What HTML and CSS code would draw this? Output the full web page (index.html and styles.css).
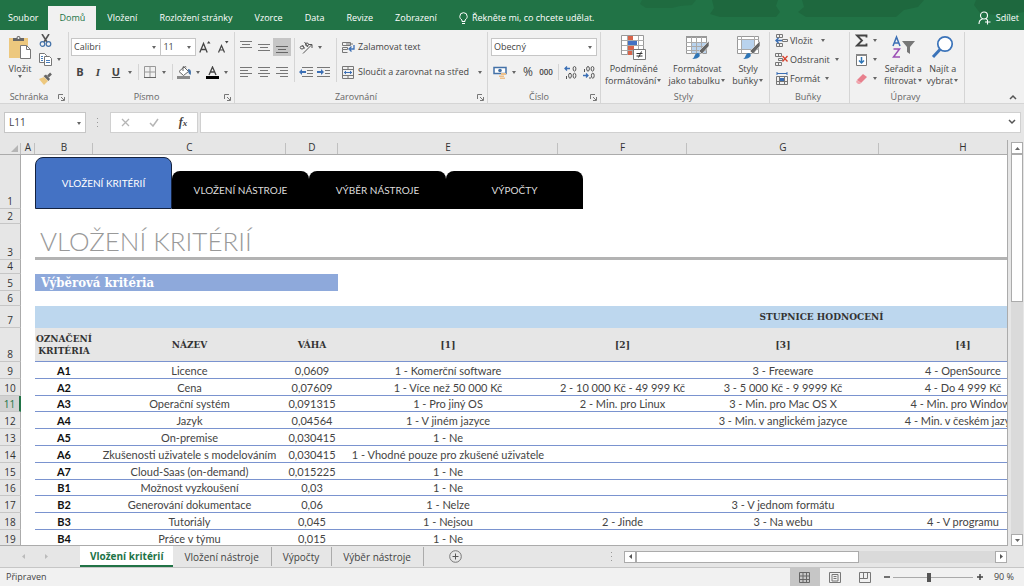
FILE: index.html
```html
<!DOCTYPE html>
<html lang="cs">
<head>
<meta charset="utf-8">
<title>Vložení kritérií</title>
<link rel="stylesheet" href="styles.css">
</head>
<body>
<header class="topbar">
  <svg class="topbar-art" viewBox="0 0 400 30" aria-hidden="true"><path d="M18 0h54l-4 5-12 1-8 2H22l-6-4z" fill="#1f6b40"/><path d="M88 0h66l-2 6 4 6-4 5H96l-10-3 4-6z" fill="#1e683e"/><path d="M178 0h122l-6 7-14 3-8 7h-90l-8-5 6-5z" fill="#1e683e"/><path d="M352 0h48v12l-20 4-24-3-6-8z" fill="#1e683e"/></svg>
  <nav class="tabs">
    <button class="tab">Soubor</button>
    <button class="tab tab-on">Domů</button>
    <button class="tab">Vložení</button>
    <button class="tab">Rozložení stránky</button>
    <button class="tab">Vzorce</button>
    <button class="tab">Data</button>
    <button class="tab">Revize</button>
    <button class="tab">Zobrazení</button>
    <button class="tab tell"><svg width="9" height="13" viewBox="0 0 9 13" fill="none" stroke="#fff"><path d="M3 9.5V8C1.500 7 .8 6 .8 4.400a3.700 3.700 0 0 1 7.400 0C8.200 6 7.500 7 6 8v1.500zM3 11.500h3"/></svg>Řekněte mi, co chcete udělat.</button>
  </nav>
  <button class="share"><svg width="13" height="14" viewBox="0 0 13 14" fill="none" stroke="#fff" stroke-width="1.100"><circle cx="6" cy="4.500" r="3.500"/><path d="M1 13c0-3 1.500-4.500 3.500-5M8 8l1 .6M9.500 8.500v5M7 11h5.500"/></svg>Sdílet</button>
</header>

<section class="ribbon">
  <div class="group g-clip">
    <div class="body">
      <button class="big"><svg width="24" height="25" viewBox="0 0 24 25"><path d="M1 3h19v20H1z" fill="#edc87e"/><path d="M5 3h3.500a2 2 0 0 1 4 0H16v3H5z" fill="#666"/><circle cx="10.500" cy="3" r="1" fill="#f1f1f1"/><path d="M12.500 10.500h6l4 4v9h-10z" fill="#fff" stroke="#777"/><path d="M18.500 10.500v4h4" fill="none" stroke="#777"/></svg><span>Vložit</span><i class="caret"></i></button>
      <div class="stack">
        <button class="row"><svg width="13" height="13" viewBox="0 0 13 13" fill="none"><path d="M3 0l5 8M10 0L5 8" stroke="#555" stroke-width="1.600"/><circle cx="3.500" cy="10" r="2.300" stroke="#4472a8" stroke-width="1.200"/><circle cx="9.500" cy="10" r="2.300" stroke="#4472a8" stroke-width="1.200"/></svg></button>
        <button class="row"><svg width="13" height="13" viewBox="0 0 13 13"><path d="M.5.500h5l2 2v7h-7z" fill="#fff" stroke="#777"/><path d="M5.500 3.500h5l2 2v7h-7z" fill="#fff" stroke="#777"/><path d="M2 3.500h2M2 5.500h2M2 7.500h2M7 7.500h4M7 9.500h4" stroke="#4a7ebb"/></svg><i class="caret"></i></button>
        <button class="row"><svg width="13" height="13" viewBox="0 0 13 13"><path d="M0 7l5-2 4 4-4 4z" fill="#edc87e"/><path d="M4.500 4l5 5 1.500-2-4-4.500z" fill="#666"/><path d="M9 4.500l3-3" stroke="#666" stroke-width="2.500"/></svg></button>
      </div>
    </div>
    <div class="foot"><span>Schránka</span><svg class="launch" viewBox="0 0 7 7"><path d="M.5 5V.500H5M3 3l3 3M6.500 3v3.500H3" fill="none" stroke="#777"/></svg></div>
  </div>

  <div class="group g-font">
    <div class="body rows">
      <div class="line">
        <span class="pick w-font"><select aria-label="Písmo"><option>Calibri</option></select></span><span class="pick w-size"><select aria-label="Velikost"><option>11</option></select></span>
        <button class="t grow"><svg width="12" height="14" viewBox="0 0 12 14" fill="none" stroke="#444"><path d="M.8 12.500L4.500 3.500l3.700 9M2.200 9.500h4.600" stroke-width="1.300"/><path d="M8 3.500L9.700 1l1.800 2.500z" fill="#444" stroke="none"/></svg></button>
        <button class="t"><svg width="12" height="14" viewBox="0 0 12 14" fill="none" stroke="#444"><path d="M1.500 12.500L4.500 5.500l3 7M2.500 10h4" stroke-width="1.200"/><path d="M8 1h3.500L9.700 3.500z" fill="#444" stroke="none"/></svg></button>
      </div>
      <div class="line">
        <button class="t b">B</button><button class="t i">I</button><button class="t u">U</button><i class="caret"></i><i class="sep"></i>
        <button class="t"><svg width="12" height="12" viewBox="0 0 12 12" fill="none" stroke="#999"><path d="M.5 11V.500h11V11M6 1v10M1 6h10"/><path d="M0 11.500h12" stroke="#666"/></svg></button><i class="caret"></i><i class="sep"></i>
        <button class="t"><svg width="15" height="13" viewBox="0 0 15 13"><path d="M2 5.500L7 1l4.500 4.500-5 4z" fill="#fff" stroke="#666"/><path d="M6 5V1.500a1.500 1.500 0 0 1 3 0" fill="none" stroke="#666"/><path d="M11 3c3 0 3.500 3 2.500 6-2-1-2.500-3-2.500-6z" fill="#4472a8"/><path d="M0 10h13v3H0z" fill="#8a8a8a"/></svg></button><i class="caret"></i>
        <button class="t"><svg width="13" height="13" viewBox="0 0 13 13"><path d="M3 9l3.500-8L10 9M4.300 6h4.500" fill="none" stroke="#444" stroke-width="1.300"/><path d="M0 10h13v3H0z"/></svg></button><i class="caret"></i>
      </div>
    </div>
    <div class="foot"><span>Písmo</span><svg class="launch" viewBox="0 0 7 7"><path d="M.5 5V.500H5M3 3l3 3M6.500 3v3.500H3" fill="none" stroke="#777"/></svg></div>
  </div>

  <div class="group g-align">
    <div class="body">
      <div class="rows">
        <div class="line">
          <button class="t"><svg width="12" height="12" viewBox="0 0 12 12" stroke="#777"><path d="M0 .5h12M2 3.500h8M0 6.500h12"/></svg></button>
          <button class="t"><svg width="12" height="12" viewBox="0 0 12 12" stroke="#777"><path d="M0 3.500h12M2 6.500h8M0 9.500h12"/></svg></button>
          <button class="t on"><svg width="12" height="12" viewBox="0 0 12 12" stroke="#666"><path d="M0 5.500h12M2 8.500h8M0 11.500h12"/></svg></button>
        </div>
        <div class="line">
          <button class="t"><svg width="12" height="10" viewBox="0 0 12 10" stroke="#777"><path d="M0 .5h12M0 3.500h8M0 6.500h12M0 9.500h8"/></svg></button>
          <button class="t"><svg width="12" height="10" viewBox="0 0 12 10" stroke="#777"><path d="M0 .5h12M2 3.500h8M0 6.500h12M2 9.500h8"/></svg></button>
          <button class="t"><svg width="12" height="10" viewBox="0 0 12 10" stroke="#777"><path d="M0 .5h12M4 3.500h8M0 6.500h12M4 9.500h8"/></svg></button>
        </div>
      </div>
      <i class="sep"></i>
      <div class="rows w-dir">
        <div class="line">
          <button class="t"><svg width="14" height="13" viewBox="0 0 14 13" fill="none" stroke="#555"><path d="M4 12.500L12.500 4M9.500 3.500h3.500V7"/><ellipse cx="3" cy="6.500" rx="1.800" ry="1.500"/><path d="M3.500 4l2 3.500M5.500 1l3.500 5"/><ellipse cx="8" cy="3.500" rx="1.500" ry="1.500"/></svg></button><i class="caret"></i>
        </div>
        <div class="line">
          <button class="t"><svg width="14" height="10" viewBox="0 0 14 10"><path d="M3 .5h11M8 3.500h6M8 6.500h6M3 9.500h11" stroke="#777"/><path d="M0 5l3-3v2h4v2H3v2z" fill="#3b6fb5"/></svg></button>
          <button class="t"><svg width="14" height="10" viewBox="0 0 14 10"><path d="M0 .5h13M8 3.500h5M8 6.500h5M0 9.500h13" stroke="#777"/><path d="M7 5L4 2v2H0v2h4v2z" fill="#3b6fb5"/></svg></button>
        </div>
      </div>
      <i class="sep"></i>
      <div class="rows">
        <button class="line lab"><svg width="14" height="13" viewBox="0 0 14 13" fill="none" stroke="#777"><path d="M1.500 1.500h8v3h-8zM1.500 6.500h5v2h-5zM1.500 8.500v3h5"/><path d="M5 3h7" /><path d="M13 4v4H9M10.500 5.500L8 8l2.500 2.500" stroke="#3b6fb5" stroke-width="1.300"/></svg>Zalamovat text</button>
        <button class="line lab"><svg width="14" height="13" viewBox="0 0 14 13" fill="none" stroke="#777"><path d="M1.500.500h11v12h-11zM1.500 3.500h11M1.500 9.500h11M7 .500v3M7 9.500v3"/><path d="M3 6.500h8M5 5L3.300 6.500 5 8M9 5l1.700 1.500L9 8" stroke="#3b6fb5"/></svg>Sloučit a zarovnat na střed<i class="caret far"></i></button>
      </div>
    </div>
    <div class="foot"><span>Zarovnání</span><svg class="launch" viewBox="0 0 7 7"><path d="M.5 5V.500H5M3 3l3 3M6.500 3v3.500H3" fill="none" stroke="#777"/></svg></div>
  </div>

  <div class="group g-num">
    <div class="body rows">
      <div class="line"><span class="pick w-num"><select aria-label="Formát čísla"><option>Obecný</option></select></span></div>
      <div class="line">
        <button class="t"><svg width="15" height="13" viewBox="0 0 15 13"><path d="M1 1.500h12v6H1z" fill="#fff" stroke="#4472a8" stroke-width="1.500"/><circle cx="7" cy="4.500" r="1.800" fill="#4472a8"/><path d="M8 7h5v2H8zM6 9.500h5v1.500H6zM7 11.500h5V13H7z" fill="#edc08a"/></svg></button><i class="caret"></i>
        <button class="t pct">%</button><button class="t zeros">000</button><i class="sep"></i>
        <button class="t"><svg width="13" height="13" viewBox="0 0 13 13" fill="none" stroke="#555"><path d="M6 2.500H1M3 .500l-2 2 2 2" stroke="#3b6fb5" stroke-width="1.300"/><ellipse cx="10.500" cy="2.800" rx="1.400" ry="2.300"/><path d="M2.500 10v3"/><ellipse cx="6" cy="9.700" rx="1.400" ry="2.500"/><ellipse cx="10.500" cy="9.700" rx="1.400" ry="2.500"/></svg></button>
        <button class="t"><svg width="13" height="13" viewBox="0 0 13 13" fill="none" stroke="#555"><path d="M1 9.500h5M4 7.500l2 2-2 2" stroke="#3b6fb5" stroke-width="1.300"/><ellipse cx="6" cy="2.800" rx="1.400" ry="2.300"/><ellipse cx="10.500" cy="2.800" rx="1.400" ry="2.300"/><path d="M2.500 3v3M8 11v2"/><ellipse cx="10.800" cy="9.700" rx="1.400" ry="2.500"/></svg></button>
      </div>
    </div>
    <div class="foot"><span>Číslo</span><svg class="launch" viewBox="0 0 7 7"><path d="M.5 5V.500H5M3 3l3 3M6.500 3v3.500H3" fill="none" stroke="#777"/></svg></div>
  </div>

  <div class="group g-style">
    <div class="body">
      <button class="big"><svg width="25" height="25" viewBox="0 0 25 25"><path d="M.5.500h22v19H.5z" fill="#fff" stroke="#999"/><path d="M6.500 1v19M11.500 1v19M17.500 1v19M1 5.500h22M1 10.500h22M1 15.500h22" stroke="#aaa"/><path d="M7 1h5v4H7zM7 11h6v4H7zM7 16h4v4H7z" fill="#d8644a"/><path d="M7 6h9v4H7z" fill="#4472c4"/><path d="M12.500 14.500h12v10h-12z" fill="#fff" stroke="#777"/><path d="M15.500 18.500h6M15.500 21h6M20.500 16.500l-3 6" stroke="#333"/></svg><span>Podmíněné<br>formátování<i class="caret"></i></span></button>
      <button class="big"><svg width="25" height="25" viewBox="0 0 25 25"><path d="M1.500 1.500h20v17h-20z" fill="#fff" stroke="#999"/><path d="M1 1h21v2H1z" fill="#999"/><path d="M7 7h14v11H7z" fill="#b9d3ee"/><path d="M6.500 2v17M11.500 2v17M16.500 2v17M1 7.500h21M1 11.500h21M1 15.500h21" stroke="#aaa"/><path d="M24 6v5l-7 8-3-3z" fill="#666" stroke="#f1f1f1" stroke-width=".6"/><path d="M7 24c3-1 2-6 6-6 3 1 3 6-6 6z" fill="#2e75b6"/></svg><span>Formátovat<br>jako tabulku<i class="caret"></i></span></button>
      <button class="big"><svg width="25" height="25" viewBox="0 0 25 25"><path d="M1.500 1.500h21v17h-21z" fill="#fff" stroke="#999"/><path d="M5.500 1v18M18.500 1v18M1 4.500h22M1 14.500h22" stroke="#aaa"/><path d="M6 5h12v9H6z" fill="#b9d3ee"/><path d="M24 6v5l-7 8-3-3z" fill="#666" stroke="#f1f1f1" stroke-width=".6"/><path d="M7 24c3-1 2-6 6-6 3 1 3 6-6 6z" fill="#2e75b6"/></svg><span>Styly<br>buňky<i class="caret"></i></span></button>
    </div>
    <div class="foot"><span>Styly</span></div>
  </div>

  <div class="group g-cell">
    <div class="body stack3">
      <button class="row"><svg width="13" height="13" viewBox="0 0 13 13" fill="none" stroke="#777"><path d="M1.500.500h6v3h-6zM4.500.500v3M1.500 9.500h6v3h-6zM4.500 9.500v3M7.500 5.500h5v2h-5z"/><path d="M7 6.500H1M3.500 4L1 6.500 3.500 9" stroke="#3b6fb5" stroke-width="1.500"/></svg>Vložit<i class="caret far"></i></button>
      <button class="row"><svg width="13" height="13" viewBox="0 0 13 13" fill="none" stroke="#777"><path d="M.5.500h6v3h-6zM3.500.500v3M3.500 5.500h4v2h-4zM.5 9.500h6v3h-6zM3.500 9.500v3"/><path d="M7.500 3l5 5.500M12.500 3l-5 5.500" stroke="#d9432f" stroke-width="1.300"/></svg>Odstranit<i class="caret"></i></button>
      <button class="row"><svg width="13" height="13" viewBox="0 0 13 13" fill="none" stroke="#777"><path d="M1.500 4.500h11v8h-11zM4.500 4v8M9.500 4v8M1 9.500h11"/><path d="M2 1.500h10M2 0v3M12 0v3" stroke="#3b6fb5"/><path d="M5 6h4v3H5z" fill="#3b6fb5" stroke="none"/></svg>Formát<i class="caret"></i></button>
    </div>
    <div class="foot"><span>Buňky</span></div>
  </div>

  <div class="group g-edit">
    <div class="body">
      <div class="stack3">
        <button class="row"><svg width="13" height="13" viewBox="0 0 13 13"><path d="M11.500 3.500V1.500H2l5 5-5 5h9.500v-2" fill="none" stroke="#444" stroke-width="1.800"/></svg><i class="caret"></i></button>
        <button class="row"><svg width="13" height="13" viewBox="0 0 13 13"><path d="M1.500 1.500h10v11h-10z" fill="#fff" stroke="#777"/><path d="M1 1h11v2H1z" fill="#888"/><path d="M6.500 4v6M4 7.500l2.500 2.500L9 7.500" fill="none" stroke="#2e75b6" stroke-width="1.500"/></svg><i class="caret"></i></button>
        <button class="row"><svg width="13" height="13" viewBox="0 0 13 13"><path d="M2 8l6-6 4 3-6 6z" fill="#e8808d"/><path d="M2 8l4 3-1 1H3L1 10z" fill="#f0a6ae"/></svg><i class="caret"></i></button>
      </div>
      <button class="big"><svg width="25" height="25" viewBox="0 0 25 25" fill="none"><path d="M2 11L5.500 2 9 11M3.200 8h4.600" stroke="#3b6fb5" stroke-width="1.500"/><path d="M2.500 14H8.500l-6 8H9" stroke="#9b4fb5" stroke-width="1.500"/><path d="M11 6h13l-5 6v7l-3-2v-5z" fill="#777"/></svg><span>Seřadit a<br>filtrovat<i class="caret"></i></span></button>
      <button class="big"><svg width="25" height="25" viewBox="0 0 25 25" fill="none" stroke="#3b73b9"><circle cx="15" cy="9" r="7.200" fill="#fff" stroke-width="1.700"/><path d="M10 14.500L3 22" stroke-width="3"/></svg><span>Najít a<br>vybrat<i class="caret"></i></span></button>
    </div>
    <div class="foot"><span>Úpravy</span></div>
  </div>
  <button class="fold" aria-label="Sbalit pás karet"><svg width="8" height="6" viewBox="0 0 8 6"><path d="M1 5l3-3 3 3" fill="none" stroke="#555" stroke-width="1.500"/></svg></button>
</section>

<section class="fbar">
  <span class="pick name"><input aria-label="Pole názvů" value="L11"></span>
  <svg class="dots" width="3" height="9" viewBox="0 0 3 9" fill="#999"><path d="M1 0h1v1H1zM1 4h1v1H1zM1 8h1v1H1z"/></svg>
  <div class="fbtns">
    <button aria-label="Zrušit"><svg width="9" height="9" viewBox="0 0 9 9"><path d="M1 1l7 7M8 1L1 8" stroke="#b5b5b5" stroke-width="1.300"/></svg></button>
    <button aria-label="Zadat"><svg width="10" height="9" viewBox="0 0 10 9"><path d="M1 5l3 3 5-7" fill="none" stroke="#b5b5b5" stroke-width="1.500"/></svg></button>
    <button class="fx">f<small>x</small></button>
  </div>
  <div class="formula"><input aria-label="Řádek vzorců"><svg width="8" height="6" viewBox="0 0 8 6"><path d="M1 1l3 3 3-3" fill="none" stroke="#555" stroke-width="1.500"/></svg></div>
</section>

<main class="work">
  <div class="sheet">
    <table>
      <colgroup><col class="c0"><col class="ca"><col class="cb"><col class="cc"><col class="cd"><col class="ce"><col class="cf"><col class="cg"><col class="ch"><col class="ci"></colgroup>
      <thead><tr><th class="corner"><svg width="7" height="7" viewBox="0 0 7 7"><path d="M7 0v7H0z" fill="#b5b5b5"/></svg></th><th>A</th><th>B</th><th>C</th><th>D</th><th>E</th><th>F</th><th>G</th><th>H</th><th></th></tr></thead>
      <tbody>
        <tr class="r1"><th>1</th><td></td><td colspan="8"><nav class="cards"><a class="card card-on" href="#k">VLOŽENÍ KRITÉRIÍ</a><a class="card" href="#n">VLOŽENÍ NÁSTROJE</a><a class="card" href="#v">VÝBĚR NÁSTROJE</a><a class="card" href="#p">VÝPOČTY</a></nav></td></tr>
        <tr class="r2"><th>2</th><td colspan="9"></td></tr>
        <tr class="r3"><th>3</th><td></td><td class="title" colspan="8"><h1>VLOŽENÍ KRITÉRIÍ</h1></td></tr>
        <tr class="r4"><th>4</th><td colspan="9"></td></tr>
        <tr class="r5"><th>5</th><td></td><td class="sub" colspan="3">Výběrová kritéria</td><td colspan="5"></td></tr>
        <tr class="r6"><th>6</th><td colspan="9"></td></tr>
        <tr class="r7"><th>7</th><td></td><td class="band" colspan="3"></td><td class="band" colspan="5">STUPNICE HODNOCENÍ</td></tr>
        <tr class="r8 heads"><th>8</th><td></td><td>OZNAČENÍ KRITÉRIA</td><td>NÁZEV</td><td>VÁHA</td><td>[1]</td><td>[2]</td><td>[3]</td><td>[4]</td><td></td></tr>
        <tr class="d"><th>9</th><td></td><td>A1</td><td>Licence</td><td>0,0609</td><td>1 - Komerční software</td><td></td><td>3 - Freeware</td><td>4 - OpenSource</td><td></td></tr>
        <tr class="d"><th>10</th><td></td><td>A2</td><td>Cena</td><td>0,07609</td><td>1 - Více než 50 000 Kč</td><td>2 - 10 000 Kč - 49 999 Kč</td><td>3 - 5 000 Kč - 9 9999 Kč</td><td>4 - Do 4 999 Kč</td><td></td></tr>
        <tr class="d short cur"><th>11</th><td></td><td>A3</td><td>Operační systém</td><td>0,091315</td><td>1 - Pro jiný OS</td><td>2 - Min. pro Linux</td><td>3 - Min. pro Mac OS X</td><td>4 - Min. pro Windows</td><td></td></tr>
        <tr class="d"><th>12</th><td></td><td>A4</td><td>Jazyk</td><td>0,04564</td><td>1 - V jiném jazyce</td><td></td><td>3 - Min. v anglickém jazyce</td><td>4 - Min. v českém jazyce</td><td></td></tr>
        <tr class="d"><th>13</th><td></td><td>A5</td><td>On-premise</td><td>0,030415</td><td>1 - Ne</td><td></td><td></td><td></td><td></td></tr>
        <tr class="d"><th>14</th><td></td><td>A6</td><td>Zkušenosti uživatele s modelováním</td><td>0,030415</td><td>1 - Vhodné pouze pro zkušené uživatele</td><td></td><td></td><td></td><td></td></tr>
        <tr class="d"><th>15</th><td></td><td>A7</td><td>Cloud-Saas (on-demand)</td><td>0,015225</td><td>1 - Ne</td><td></td><td></td><td></td><td></td></tr>
        <tr class="d short"><th>16</th><td></td><td>B1</td><td>Možnost vyzkoušení</td><td>0,03</td><td>1 - Ne</td><td></td><td></td><td></td><td></td></tr>
        <tr class="d"><th>17</th><td></td><td>B2</td><td>Generování dokumentace</td><td>0,06</td><td>1 - Nelze</td><td></td><td>3 - V jednom formátu</td><td></td><td></td></tr>
        <tr class="d"><th>18</th><td></td><td>B3</td><td>Tutoriály</td><td>0,045</td><td>1 - Nejsou</td><td>2 - Jinde</td><td>3 - Na webu</td><td>4 - V programu</td><td></td></tr>
        <tr class="d"><th>19</th><td></td><td>B4</td><td>Práce v týmu</td><td>0,015</td><td>1 - Ne</td><td></td><td></td><td></td><td></td></tr>
      </tbody>
    </table>
  </div>
  <div class="vscroll">
    <button class="arrow" aria-label="Nahoru"><svg width="5" height="3" viewBox="0 0 5 3"><path d="M0 3l2.500-3L5 3z" fill="#666"/></svg></button>
    <div class="vtrack"><div class="vthumb"></div></div>
    <button class="arrow" aria-label="Dolů"><svg width="5" height="3" viewBox="0 0 5 3"><path d="M0 0l2.500 3L5 0z" fill="#666"/></svg></button>
  </div>
</main>

<section class="sheets">
  <div class="step"><button aria-label="Předchozí list"><svg width="3" height="5" viewBox="0 0 3 5"><path d="M3 0L0 2.500 3 5z" fill="#bbb"/></svg></button><button aria-label="Další list"><svg width="3" height="5" viewBox="0 0 3 5"><path d="M0 0l3 2.500L0 5z" fill="#bbb"/></svg></button></div>
  <button class="stab stab-on">Vložení kritérií</button>
  <button class="stab">Vložení nástroje</button>
  <button class="stab">Výpočty</button>
  <button class="stab">Výběr nástroje</button>
  <button class="add" aria-label="Nový list"><svg width="13" height="13" viewBox="0 0 13 13" fill="none" stroke="#777"><circle cx="6.500" cy="6.500" r="5.800"/><path d="M3.500 6.500h6M6.500 3.500v6" stroke="#555"/></svg></button>
  <svg class="dots" width="3" height="9" viewBox="0 0 3 9" fill="#999"><path d="M1 0h1v1H1zM1 4h1v1H1zM1 8h1v1H1z"/></svg>
  <div class="hscroll">
    <button class="arrow" aria-label="Vlevo"><svg width="3" height="5" viewBox="0 0 3 5"><path d="M3 0L0 2.500 3 5z" fill="#555"/></svg></button>
    <div class="htrack"><div class="hthumb"></div></div>
    <button class="arrow" aria-label="Vpravo"><svg width="3" height="5" viewBox="0 0 3 5"><path d="M0 0l3 2.500L0 5z" fill="#555"/></svg></button>
  </div>
</section>

<footer class="status">
  <span class="ready">Připraven</span>
  <button class="view view-on" aria-label="Normálně"><svg width="12" height="11" viewBox="0 0 12 11" fill="none" stroke="#666"><path d="M.5.500h10v10H.5zM4 .500v10M7.500.500v10M.5 4h10M.5 7.500h10"/></svg></button>
  <button class="view" aria-label="Rozložení stránky"><svg width="12" height="11" viewBox="0 0 12 11" fill="none" stroke="#777"><path d="M.5.500h11v10H.5zM3 2.500h6v6.500H3zM4.500 4.500h3M4.500 6.500h3"/></svg></button>
  <button class="view" aria-label="Konce stránek"><svg width="12" height="11" viewBox="0 0 12 11" fill="none" stroke="#777"><path d="M.5.500h11v10H.5zM4.500.500v6M8.500.500v6M.5 6.500h8"/></svg></button>
  <button class="zoom" aria-label="Oddálit"><svg width="6" height="6" viewBox="0 0 6 6"><path d="M0 3h6" stroke="#444" stroke-width="1.500"/></svg></button>
  <input class="slider" type="range" min="0" max="100" value="45" aria-label="Lupa">
  <button class="zoom" aria-label="Přiblížit"><svg width="6" height="6" viewBox="0 0 6 6"><path d="M0 3h6M3 0v6" stroke="#444" stroke-width="1.500"/></svg></button>
  <span class="pctval">90 %</span>
</footer>
</body>
</html>
```
FILE: styles.css
```css
* { box-sizing: border-box; }
body {
  margin: 0;
  height: 100vh;
  display: flex;
  flex-direction: column;
  overflow: hidden;
  background: #e6e6e6;
  color: #444;
  font: 9px/12px "Open Sans", "Noto Sans", sans-serif;
}
button, input, select {
  font: inherit;
  color: inherit;
  margin: 0;
  padding: 0;
  border: 0;
  background: none;
}
svg { display: block; flex: none; }

/* title bar */
.topbar {
  position: relative;
  display: flex;
  justify-content: space-between;
  flex: none;
  height: 30px;
  padding-top: 6px;
  background: #217346;
  color: #fff;
}
.topbar-art { position: absolute; top: 0; right: 0; width: 400px; height: 30px; }
.tabs { display: flex; }
.tab { padding: 0 11px; white-space: nowrap; }
.tab:first-child { padding: 0 10px 0 8px; }
.tab-on { background: #f1f1f1; color: #217346; }
.tell { display: flex; align-items: center; gap: 4px; }
.share { position: relative; display: flex; align-items: center; gap: 5px; padding-right: 5px; }

/* ribbon */
.ribbon {
  position: relative;
  display: flex;
  flex: none;
  height: 74px;
  padding-top: 2px;
  background: #f1f1f1;
  border-bottom: 1px solid #d5d5d5;
}
.group {
  display: flex;
  flex-direction: column;
  flex: none;
  border-right: 1px solid #d5d5d5;
}
.g-clip { width: 69px; }
.g-font { width: 166px; }
.g-align { width: 253px; }
.g-num { width: 113px; }
.g-style { width: 169px; }
.g-cell { width: 80px; }
.g-edit { width: 115px; }
.body { display: flex; flex: 1; padding: 0 2px; }
.rows { display: flex; flex-direction: column; gap: 7px; padding-top: 6px; }
.body > .sep { margin-top: 6px; height: 44px; }
.line { display: flex; align-items: center; height: 18px; white-space: nowrap; }
.foot { display: flex; align-items: center; height: 12px; padding-right: 3px; color: #666; }
.foot span { flex: 1; text-align: center; }
.launch { width: 7px; height: 7px; }
.t { display: flex; align-items: center; justify-content: center; width: 18px; height: 18px; font-size: 11px; }
.on { background: #c6c6c6; }
.b { font-weight: 700; }
.i { font-style: italic; font-weight: 700; font-family: "Liberation Serif", serif; }
.u { font-weight: 700; text-decoration: underline; }
.pct { font-size: 12px; }
.zeros { font-size: 8px; font-weight: 600; }
.caret { display: inline-flex; justify-content: center; flex: none; width: 10px; }
.caret::after, .pick::after {
  content: "";
  border: 2px solid transparent;
  border-top: 3px solid #666;
  border-bottom: 0;
}
.caret.far { margin-left: 3px; }
.sep { flex: none; width: 1px; height: 16px; margin: 0 2px 0 3px; background: #d5d5d5; }
.pick { position: relative; display: flex; height: 18px; background: #fff; border: 1px solid #c6c6c6; }
.pick::after { position: absolute; right: 4px; top: 7px; }
.pick select, .pick input { appearance: none; width: 100%; padding-left: 2px; outline: 0; }
.g-font .body { padding-left: 2px; }
.w-font { width: 91px; }
.w-size { width: 35px; border-left: 0; }
.w-num { width: 106px; }
.w-dir { width: 36px; }
.g-num .body { padding-left: 3px; }
.lab { gap: 3px; padding-left: 2px; }
.big { display: flex; flex-direction: column; align-items: center; padding-top: 3px; white-space: nowrap; }
.big span { padding-top: 3px; }
.big .caret { width: 6px; vertical-align: 2px; }
.g-clip .big { width: 30px; margin-left: 3px; }
.stack, .stack3 { display: flex; flex-direction: column; }
.stack { gap: 6px; padding: 2px 0 0 4px; }
.stack3 { gap: 6px; padding-top: 2px; }
.row { display: flex; align-items: center; gap: 2px; height: 13px; white-space: nowrap; }
.g-style .body { justify-content: space-between; padding: 0 5px 0 4px; }
.g-cell .body { padding-left: 5px; }
.g-edit .body { gap: 4px; padding-left: 5px; }
.fold { margin: auto 7px 3px auto; }

/* formula bar */
.fbar { display: flex; align-items: center; flex: none; height: 36px; padding: 0 3px 0 4px; }
.name { width: 82px; height: 21px; }
.name::after { top: 9px; }
.name input { padding-left: 4px; font-size: 10px; }
.dots { margin: 0 11px 0 10px; }
.fbtns { display: flex; align-items: center; justify-content: space-around; width: 88px; height: 21px; background: #fff; border: 1px solid #d0d0d0; }
.fx { font: italic 700 12px "Liberation Serif", serif; }
.fx small { font-size: 9px; }
.formula { display: flex; align-items: center; flex: 1; height: 21px; margin-left: 2px; padding-right: 4px; background: #fff; border: 1px solid #d0d0d0; }
.formula input { flex: 1; outline: 0; }

/* sheet */
.work { display: flex; flex: 1; min-height: 0; }
.sheet { flex: 1; min-width: 0; overflow: hidden; border-right: 1px solid #ababab; border-bottom: 1px solid #ababab; background: #fff; }
table { width: 1305px; table-layout: fixed; border-collapse: separate; border-spacing: 0; }
.c0 { width: 21px; }
.ca { width: 14px; }
.cb { width: 58px; }
.cc { width: 193px; }
.cd { width: 52px; }
.ce { width: 220px; }
.cf { width: 129px; }
.cg { width: 192px; }
.ch { width: 168px; }
.ci { width: 258px; }
th, td { padding: 0; overflow: hidden; white-space: nowrap; }
th { background: #e6e6e6; color: #333; font-weight: 400; font-size: 10px; }
thead th {
  height: 15px;
  line-height: 14px;
  border-bottom: 1px solid #ababab;
  background: linear-gradient(#c0c0c0, #c0c0c0) right bottom / 1px 11px no-repeat #e6e6e6;
}
.corner svg { margin: 3px 0 0 11px; }
tbody th { vertical-align: bottom; line-height: 13px; border-right: 1px solid #ababab; border-bottom: 1px solid #c6c6c6; }
.r1 { height: 54px; }
.r2 { height: 15px; }
.r3 { height: 36px; }
.r4 { height: 14px; }
.r5 { height: 17px; }
.r6 { height: 15px; }
.r7 { height: 22px; }
.r8 { height: 34px; }
.d { height: 17px; }
.short { height: 16px; }
.r1 td { vertical-align: bottom; }
.cards { display: flex; align-items: flex-end; }
.card {
  display: flex;
  align-items: center;
  justify-content: center;
  width: 137px;
  height: 38px;
  border-radius: 8px 8px 0 0;
  background: #000;
  color: #ddd;
  font: 10px/14px Lato, sans-serif;
  text-decoration: none;
}
.card-on { height: 52px; border: 1px solid #14223f; background: #4472c4; color: #fff; }
.title { vertical-align: bottom; border-bottom: 3px solid #b3b3b3; }
h1 { margin: 0; padding-left: 5px; font: 300 26px/32px Lato, sans-serif; color: #999; }
.sub { padding-left: 6px; background: #8ea9db; color: #fff; font: 700 13px/16px "DejaVu Serif Condensed", "DejaVu Serif", serif; }
.band { background: #bdd7ee; text-align: center; color: #333; font: 700 10px/14px "DejaVu Serif Condensed", "DejaVu Serif", serif; }
.heads td:nth-child(n+3) {
  background: #e6e6e6;
  border-bottom: 1px solid #7a93cf;
  text-align: center;
  white-space: normal;
  color: #333;
  font: 700 10px/12px "DejaVu Serif Condensed", "DejaVu Serif", serif;
}
.d td { height: inherit; font: 11px/15px Lato, sans-serif; text-align: center; color: #444; }
.d td:nth-child(n+3) { border-bottom: 1px solid #7a93cf; }
.d td:nth-child(3) { font-weight: 700; color: #111; }
.cur th { background: #d2d2d2; color: #217346; border-right: 2px solid #217346; }

/* scroll bars */
.arrow { display: flex; align-items: center; justify-content: center; flex: none; width: 12px; height: 12px; background: #fff; border: 1px solid #ababab; }
.vscroll { display: flex; flex-direction: column; flex: none; width: 16px; padding: 2px 1px 0 3px; }
.vtrack { flex: 1; background: #dadada; }
.vthumb { width: 12px; height: 39%; background: #fff; border: 1px solid #ababab; }

.sheets { display: flex; align-items: center; flex: none; height: 22px; padding-right: 17px; font-size: 10px; border-bottom: 1px solid #c6c6c6; }
.step { display: flex; gap: 20px; width: 80px; padding-left: 22px; }
.stab { height: 19px; padding: 0 11px; white-space: nowrap; }
.stab:not(.stab-on) { padding-right: 12px; border-right: 1px solid #ababab; }
.stab-on { align-self: flex-start; height: 21px; padding: 0 10px; background: #fff; border-bottom: 2px solid #217346; color: #217346; font-weight: 700; }
.add { margin-left: 25px; }
.sheets .dots { margin: 0 11px 0 auto; }
.hscroll { display: flex; width: 38%; }
.htrack { flex: 1; background: #dadada; }
.hthumb { width: 62%; height: 12px; background: #fff; border: 1px solid #ababab; }

/* status bar */
.status { display: flex; align-items: center; flex: none; height: 18px; padding: 0 10px 0 6px; background: #f1f1f1; }
.ready { margin-right: auto; }
.view { display: flex; align-items: center; justify-content: center; width: 30px; height: 18px; }
.view-on { background: #c6c6c6; }
.zoom { margin: 0 3px 0 4px; }
.slider { appearance: none; width: 80px; height: 10px; background: linear-gradient(#aaa, #aaa) center / 100% 1px no-repeat; }
.slider::-webkit-slider-thumb { appearance: none; width: 4px; height: 9px; background: #555; }
.pctval { width: 28px; text-align: right; }
```
